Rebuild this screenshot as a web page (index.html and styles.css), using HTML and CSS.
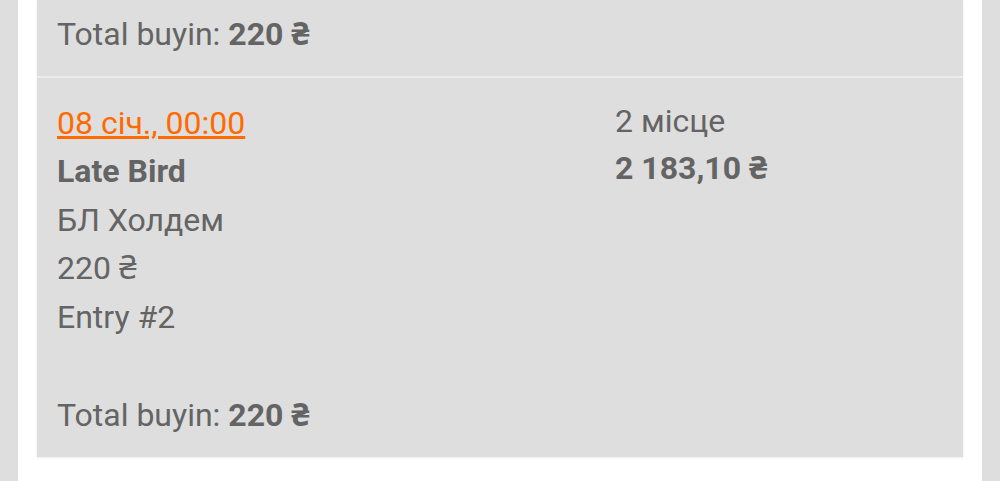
FILE: index.html
```html
<!DOCTYPE html>
<html lang="uk">
<head>
  <meta charset="UTF-8" />
  <meta name="viewport" content="width=device-width, initial-scale=1.0"/>
  <title>Tournament history</title>
  <link rel="stylesheet" href="styles.css">
</head>
<body>

  <div class="page">
    <div class="sheet">
      <div class="history">

        <div class="entry entry-cut">
          <div class="total">Total buyin: <b>220 ₴</b></div>
        </div>

        <div class="entry">
          <div class="entry-row">
            <div class="entry-info">
              <a href="#" class="entry-date">08 січ., 00:00</a>
              <div class="entry-name">Late Bird</div>
              <div>БЛ Холдем</div>
              <div>220 ₴</div>
              <div>Entry #2</div>
            </div>
            <div class="entry-result">
              <div>2 місце</div>
              <div class="entry-prize">2 183,10 ₴</div>
            </div>
          </div>
          <div class="total">Total buyin: <b>220 ₴</b></div>
        </div>

      </div>
    </div>
  </div>

</body>
</html>
```

FILE: styles.css
```css
body {
  margin: 0;
  font-family: Roboto, "Noto Sans", sans-serif;
  background: #fff;
  color: #646464;
}

.page {
  background-color: #dedede;
  padding: 0 18px;
  min-height: 481px;
}

.sheet {
  background-color: #fff;
  padding: 0 19px 22px;
  min-height: 459px;
}

.history {
  background-color: #dedede;
  box-shadow: 0 1px 2px rgba(0, 0, 0, 0.08);
}

.entry {
  padding: 0 20px;
  font-size: 32px;
  line-height: 48.6px;
}

.entry + .entry {
  border-top: 2px solid #ebebeb;
}

.entry-cut {
  padding-top: 10px;
  padding-bottom: 17px;
}

.entry-row {
  display: grid;
  grid-template-columns: 558px 1fr;
  padding-top: 21px;
}

.entry-date {
  color: #ff6a00;
  text-decoration: underline;
}

.entry-name,
.entry-prize,
.total b {
  font-weight: bold;
}

.entry-result {
  margin-top: -1px;
  line-height: 47.5px;
}

.entry .total {
  margin-top: 49px;
  padding-bottom: 18px;
}

.entry-cut .total {
  margin-top: 0;
  padding-bottom: 0;
}
```
